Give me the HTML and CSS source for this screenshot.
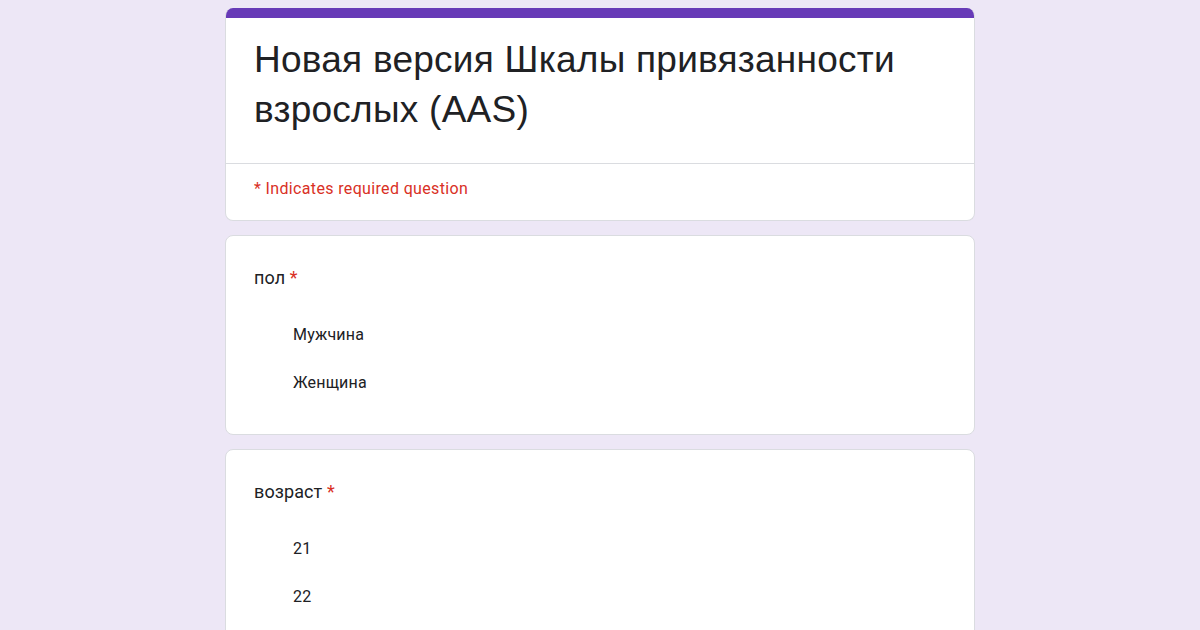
FILE: index.html
```html
<!DOCTYPE html>
<html lang="ru">
<head>
<meta charset="utf-8">
<title>Новая версия Шкалы привязанности взрослых (AAS)</title>
<link rel="stylesheet" href="styles.css">
</head>
<body>
<div class="page">
  <div class="card header-card">
    <div class="accent"></div>
    <div class="title-block">
      <h1 class="title">Новая версия Шкалы привязанности взрослых (AAS)</h1>
    </div>
    <div class="required-note">* Indicates required question</div>
  </div>

  <div class="card question">
    <div class="q-title">пол <span class="star">*</span></div>
    <div class="options">
      <div class="option">Мужчина</div>
      <div class="option">Женщина</div>
    </div>
  </div>

  <div class="card question">
    <div class="q-title">возраст <span class="star">*</span></div>
    <div class="options">
      <div class="option">21</div>
      <div class="option">22</div>
    </div>
  </div>
</div>
</body>
</html>
```

FILE: styles.css
```css
html, body {
  margin: 0;
  padding: 0;
}
body {
  background: #ede7f6;
  font-family: Roboto, "Liberation Sans", Arial, sans-serif;
  color: #202124;
  height: 630px;
  overflow: hidden;
}
.page {
  width: 750px;
  margin: 0 auto;
  padding-top: 8px;
  display: flex;
  flex-direction: column;
  gap: 14px;
}
.card {
  background: #fff;
  border: 1px solid #dadce0;
  border-radius: 8px;
  box-sizing: border-box;
  overflow: hidden;
}
.header-card {
  border-top: none;
}
.accent {
  height: 10px;
  background: #673ab7;
  margin: 0 -1px;
}
.title-block {
  padding: 17px 28px 28px 28px;
  border-bottom: 1px solid #dadce0;
}
.title {
  margin: 0;
  font-family: "Liberation Sans", Arial, sans-serif;
  font-weight: 400;
  font-size: 37px;
  line-height: 50px;
  letter-spacing: 0.25px;
  color: #202124;
}
.required-note {
  padding: 14px 28px 20px 28px;
  font-size: 16px;
  line-height: 22px;
  letter-spacing: 0.35px;
  color: #d93025;
}
.question {
  padding: 30px 28px 40px 28px;
}
.q-title {
  font-size: 18px;
  line-height: 24px;
  letter-spacing: 0.1px;
}
.star {
  color: #d93025;
}
.options {
  margin-top: 34px;
  padding-left: 39px;
  display: flex;
  flex-direction: column;
  gap: 26px;
}
.option {
  font-size: 16px;
  line-height: 22px;
  letter-spacing: 0.2px;
}
```
